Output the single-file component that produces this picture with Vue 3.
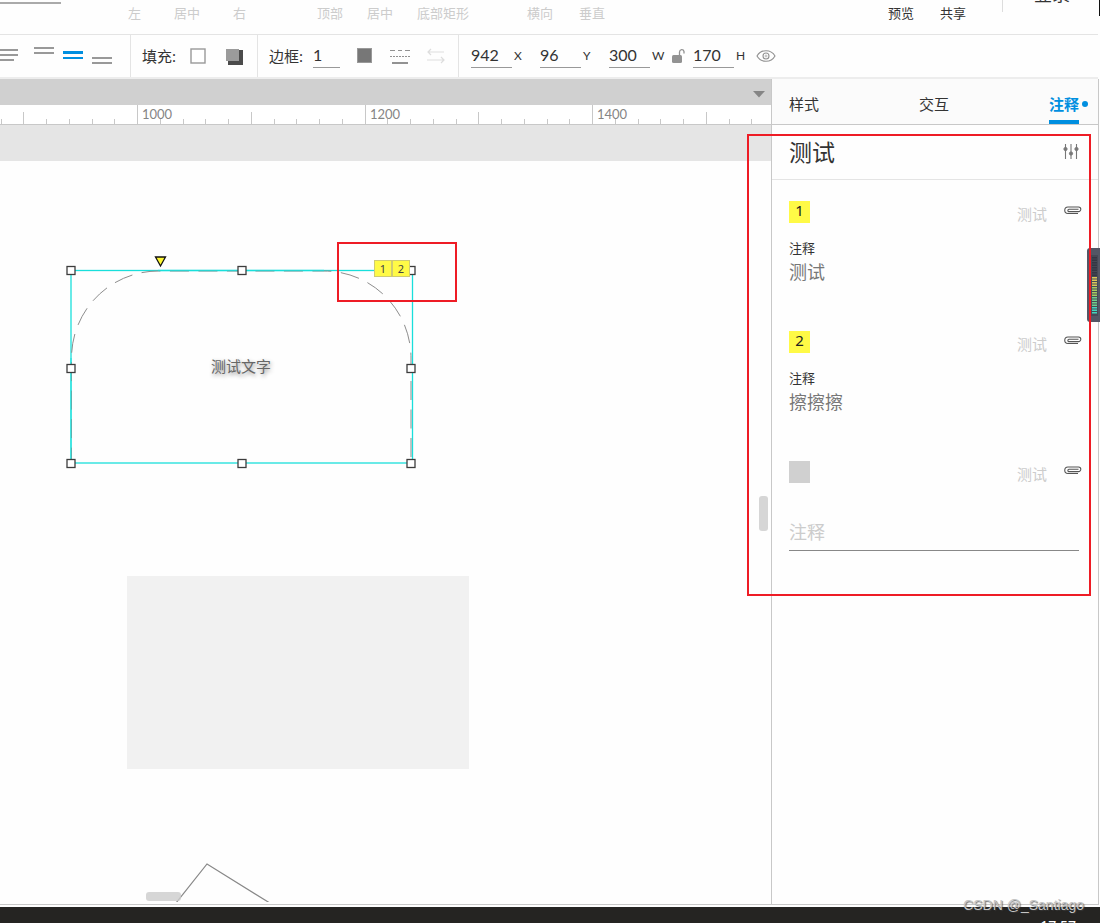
<script setup>
import { ref } from 'vue'

const alignGroups = [
  { name: 'horizontal', items: ['左', '居中', '右'] },
  { name: 'vertical', items: ['顶部', '居中', '底部矩形'] },
  { name: 'distribute', items: ['横向', '垂直'] },
]

const geometry = ref([
  { key: 'X', value: '942' },
  { key: 'Y', value: '96' },
  { key: 'W', value: '300' },
  { key: 'H', value: '170' },
])
const borderWidth = ref('1')
const draft = ref('')

const ticks = Array.from({ length: 34 }, (_, i) => {
  const k = i - 6
  const major = k % 10 === 0
  const mid = k % 5 === 0
  return {
    x: Math.round(137 + 22.75 * k),
    top: major ? 0 : mid ? 7 : 14,
    label: major ? String(1000 + k * 20) : '',
  }
})

const notes = [
  { id: 1, text: '测试' },
  { id: 2, text: '擦擦擦' },
]

const handles = [
  [71, 270], [242, 270], [411, 270],
  [71, 368], [411, 368],
  [71, 463], [242, 463], [411, 463],
]

const meter = Array.from({ length: 23 }, (_, i) => ({
  y: 9 + i * 2.5,
  fill: i < 8 ? '#343743' : i < 12 ? '#d9c95a' : i < 16 ? '#a5cc62' : i < 20 ? '#6fd08c' : '#45d6bd',
}))
</script>

<template>
  <div class="app">
    <header class="menu">
      <span class="menu-rule"></span>
      <div v-for="g in alignGroups" :key="g.name" class="menu-group" :class="g.name">
        <button v-for="t in g.items" :key="t" type="button" disabled>{{ t }}</button>
      </div>
      <div class="account">
        <button type="button">预览</button>
        <button type="button">共享</button>
        <span class="account-rule"></span>
        <button type="button" class="login">登录</button>
      </div>
    </header>

    <div class="toolbar">
      <section class="tools text-tools">
        <button type="button" aria-label="左对齐" class="icon">
          <svg width="19" height="20" fill="#999"><path d="M0 3h18v2H0zM0 8h18v2H0zM0 13h14v2H0z" /></svg>
        </button>
        <button type="button" aria-label="顶部对齐" class="icon">
          <svg width="20" height="20" fill="#999"><path d="M0 1h20v2H0zM0 6h20v2H0z" /></svg>
        </button>
        <button type="button" aria-label="垂直居中" class="icon">
          <svg width="20" height="20" fill="#008fe0"><path d="M0 5h20v3H0zM0 11h20v2H0z" /></svg>
        </button>
        <button type="button" aria-label="底部对齐" class="icon">
          <svg width="20" height="20" fill="#999"><path d="M0 11h20v2H0zM0 16h20v2H0z" /></svg>
        </button>
      </section>
      <section class="tools fill-tools">
        <span class="caption">填充:</span>
        <button type="button" aria-label="填充颜色" class="icon">
          <svg width="16" height="20"><rect x="1" y="3" width="14" height="14" fill="#fff" stroke="#999" stroke-width="1.4" /></svg>
        </button>
        <button type="button" aria-label="阴影" class="icon">
          <svg width="17" height="20"><path d="M2 4h15v15H2z" fill="#4b4b4b" /><path d="M0 3h13v12H0z" fill="#9b9b9b" /></svg>
        </button>
      </section>
      <section class="tools border-tools">
        <label class="caption" for="border-width">边框:</label>
        <input id="border-width" v-model="borderWidth" class="field small" />
        <button type="button" aria-label="边框颜色" class="icon">
          <svg width="16" height="20"><rect x="0.5" y="2.5" width="14" height="14" fill="#777" stroke="#999" /></svg>
        </button>
        <button type="button" aria-label="线型" class="icon">
          <svg width="20" height="20" fill="none" stroke="#929292">
            <path d="M0 4.500h5M8 4.500h4M15 4.500h5" />
            <path d="M0 10.500h20" stroke-dasharray="2 1" />
            <path d="M2 17h16" stroke-width="2" />
          </svg>
        </button>
        <button type="button" aria-label="箭头样式" class="icon">
          <svg width="18" height="20" fill="none" stroke="#ddd" stroke-width="1.2">
            <path d="M17 6H0.500M4 3L1 6l3 3M0 14h17M14 11l3 3-3 3" />
          </svg>
        </button>
      </section>
      <section class="tools geometry">
        <template v-for="g in geometry" :key="g.key">
          <button v-if="g.key === 'H'" type="button" aria-label="锁定宽高比" class="icon lock">
            <svg width="13" height="20">
              <path d="M7.500 10V6A2.300 2.600 0 0 1 12 5.500V7.500" fill="none" stroke="#929292" stroke-width="1.300" />
              <rect x="0" y="9" width="10" height="8" rx="1.500" fill="#929292" />
            </svg>
          </button>
          <input :id="'geo-' + g.key" v-model="g.value" class="field" />
          <label :for="'geo-' + g.key" class="unit" :class="'unit-' + g.key">{{ g.key }}</label>
        </template>
        <button type="button" aria-label="显示" class="icon">
          <svg width="20" height="20" fill="none" stroke="#929292" stroke-width="1.100">
            <path d="M1 10C5 3 15 3 19 10C15 17 5 17 1 10z" /><circle cx="10" cy="10" r="3" />
            <circle cx="10" cy="10" r="1" stroke-width=".6" />
          </svg>
        </button>
      </section>
    </div>

    <main class="workspace">
      <section class="editor">
        <div class="pagebar"><button type="button" aria-label="页面列表" class="icon"><svg width="12" height="7"><path d="M0 0h12L6 6.500z" fill="#858585" /></svg></button></div>
        <svg class="ruler">
          <g v-for="t in ticks" :key="t.x">
            <rect :x="t.x" :y="t.top" width="1" :height="19 - t.top" fill="#c8c8c8" />
            <text v-if="t.label" :x="t.x + 5" y="14">{{ t.label }}</text>
          </g>
        </svg>
        <div class="stage">
          <div class="page-head"></div>
          <svg class="shapes">
            <g transform="translate(0 -125)">
              <rect x="127" y="576" width="342" height="193" fill="#f1f1f1" />
              <path d="M176 903L207 864L269 902.500" fill="none" stroke="#888" stroke-width="1.200" />
              <rect x="71" y="270.500" width="341.500" height="192.500" fill="none" stroke="#19dfdb" stroke-width="1.300" />
              <path d="M411 463V358A87 87 0 0 0 324 271H158.500A87 87 0 0 0 71.500 358V463" fill="none" stroke="#8d8d8d" stroke-dasharray="19 9.500" stroke-dashoffset="-6" />
              <path d="M71 358V463M158 270.500H324" stroke="#19dfdb" stroke-opacity=".7" stroke-width="1.300" />
              <rect v-for="h in handles" :key="h.join()" :x="h[0] - 4" :y="h[1] - 3.5" width="8" height="8" fill="#fff" stroke="#3c3c3c" stroke-width="1.300" />
              <path d="M155.500 257H165.500L160.500 266z" fill="#fdf733" stroke="#111" stroke-width="1.300" />
            </g>
          </svg>
          <div class="shape-text">测试文字</div>
          <div class="flags"><span v-for="n in notes" :key="n.id">{{ n.id }}</span></div>
          <div class="thumb vertical-thumb"></div>
          <div class="thumb horizontal-thumb"></div>
          <div class="mark flag-mark"></div>
        </div>
      </section>

      <aside class="inspector">
        <nav class="tabs">
          <button type="button">样式</button>
          <button type="button">交互</button>
          <button type="button" class="active">注释</button>
        </nav>
        <div class="title">
          <h1>测试</h1>
          <button type="button" aria-label="注释设置" class="icon">
            <svg width="16" height="16" fill="#777" stroke="#777">
              <path d="M2.500 0v15M8 0v15M13.500 0v15" stroke-width="1.100" />
              <circle cx="2.500" cy="5" r="1.600" /><circle cx="8" cy="9.500" r="1.600" /><circle cx="13.500" cy="5" r="1.600" />
            </svg>
          </button>
        </div>
        <article v-for="n in [...notes, { id: 0 }]" :key="n.id" class="note">
          <div class="note-head">
            <span class="tag" :class="{ blank: !n.id }">{{ n.id || '' }}</span>
            <span class="owner">测试</span>
            <button type="button" aria-label="附加" class="icon clip">
              <svg width="18" height="9" fill="none" stroke="#555" stroke-width="1.100">
                <path d="M14 7.500H4A3.200 3.200 0 0 1 4 1H14.500A2.300 2.300 0 0 1 14.500 5.600H5A1.100 1.100 0 0 1 5 3.300H14.500" />
              </svg>
            </button>
          </div>
          <template v-if="n.id">
            <h2>注释</h2>
            <p>{{ n.text }}</p>
          </template>
          <input v-else v-model="draft" class="draft" placeholder="注释" aria-label="注释" />
        </article>
      </aside>
    </main>

    <footer class="taskbar"><time>17:57</time></footer>

    <svg class="level" width="13" height="74">
      <rect width="20" height="74" rx="3" fill="#535665" />
      <rect x="4" y="7" width="7" height="61" fill="#464956" />
      <rect v-for="m in meter" :key="m.y" x="5" :y="m.y" width="5" height="1.500" :fill="m.fill" />
    </svg>
    <div class="mark panel-mark"></div>
    <div class="edge"></div>
    <div class="watermark">CSDN @_Santiago</div>
  </div>
</template>

<style>
html, body { margin: 0; background: #fff; }
</style>

<style scoped>
* { box-sizing: border-box; }
.app {
  position: relative;
  display: flex;
  flex-direction: column;
  height: 100vh;
  min-height: 620px;
  overflow: hidden;
  color: #333;
  background: #fefefe;
  font-family: "Noto Sans", "Noto Sans CJK SC", sans-serif;
}
button {
  padding: 0;
  border: 0;
  background: none;
  color: inherit;
  font: inherit;
  white-space: nowrap;
}
.icon { display: flex; flex: none; }
svg { display: block; }

.menu {
  position: relative;
  display: flex;
  flex: none;
  height: 35px;
  margin-right: 2px;
  padding: 3px 0 0 128px;
  border-bottom: 1px solid #e4e4e4;
  font-size: 13px;
  line-height: 20px;
}
.menu button { height: 20px; }
.menu-rule {
  position: absolute;
  left: 0;
  top: 2px;
  width: 61px;
  height: 2px;
  background: #aaa;
}
.menu-group { display: flex; gap: 26px; color: #ccc; }
.horizontal { gap: 33px; margin-right: 71px; }
.vertical { gap: 24px; margin-right: 58px; }
.account { display: flex; gap: 26px; margin-left: auto; padding-right: 28px; }
.account-rule {
  width: 1px;
  height: 12px;
  margin: -3px 5px 0 10px;
  background: #ddd;
}
.menu .login { height: 24px; margin-top: -21px; font-size: 18px; line-height: 24px; }

.toolbar {
  display: flex;
  flex: none;
  height: 44px;
  margin-right: 2px;
  border-bottom: 2px solid #ededed;
}
.tools { display: flex; align-items: center; border-right: 1px solid #e4e4e4; }
.text-tools { width: 131px; gap: 9px; }
.text-tools .icon:first-child { margin-right: 6px; }
.fill-tools { width: 127px; padding-left: 11px; }
.fill-tools .icon + .icon { margin-left: 20px; }
.border-tools { width: 201px; padding-left: 11px; gap: 17px; }
.border-tools .caption { width: 44px; margin-right: -17px; }
.geometry { flex: 1; border: 0; padding-left: 12px; }
.caption { flex: none; width: 48px; font-size: 15px; line-height: 20px; white-space: nowrap; }
.field {
  width: 41px;
  height: 24px;
  padding: 0 0 3px;
  border: 0;
  border-bottom: 1px solid #999;
  border-radius: 0;
  outline: 0;
  background: none;
  color: #333;
  font: 16px/20px Lato, sans-serif;
}
.small { width: 27px; }
.unit { width: 28px; padding-left: 2px; font: 12px/20px Lato, sans-serif; }
.unit-W, .unit-H { width: 22px; }
.lock { width: 21px; }

.workspace {
  display: flex;
  flex: 1;
  min-height: 0;
  margin-right: 1px;
  border-right: 1px solid #c8c8c8;
  border-bottom: 1px solid #c8c8c8;
}
.editor { display: flex; flex: 1; flex-direction: column; min-width: 0; }
.pagebar {
  display: flex;
  flex: none;
  align-items: center;
  justify-content: flex-end;
  height: 26px;
  padding: 4px 6px 0 0;
  background: #d0d0d0;
}
.ruler {
  flex: none;
  width: 100%;
  height: 20px;
  border-bottom: 1px solid #c8c8c8;
  background: #fff;
  font: 13px Lato, sans-serif;
}
.ruler text { fill: #858585; }
.stage { position: relative; flex: 1; min-height: 0; }
.page-head { height: 36px; background: #e5e5e5; }
.shapes { position: absolute; left: 0; top: 0; width: 100%; height: calc(100% - 2px); }
.shape-text {
  position: absolute;
  left: 211px;
  top: 231px;
  color: #666;
  font-size: 15px;
  line-height: 20px;
  text-shadow: 1px 2px 4px rgba(0, 0, 0, .45);
}
.flags { position: absolute; left: 374px; top: 135px; display: flex; }
.flags span {
  width: 18px;
  height: 17px;
  border: 1px solid #cfcb72;
  background: #fffa46;
  color: #444;
  font-size: 11px;
  line-height: 15px;
  text-align: center;
}
.thumb { position: absolute; border-radius: 3px; background: rgba(204, 204, 204, .8); }
.vertical-thumb { right: 3px; top: 371px; width: 9px; height: 35px; }
.horizontal-thumb { left: 146px; bottom: 3px; width: 35px; height: 9px; }
.mark { position: absolute; border: 2px solid #ee1c25; pointer-events: none; }
.flag-mark { left: 337px; top: 117px; width: 120px; height: 60px; }
.panel-mark { right: 9px; top: 134px; width: 344px; height: 462px; }

.inspector { flex: none; width: 327px; border-left: 1px solid #c8c8c8; }
.tabs {
  display: flex;
  justify-content: space-between;
  height: 46px;
  padding: 7px 19px 0 17px;
  border-bottom: 1px solid #c8c8c8;
  background: #fbfbfb;
  font-size: 15px;
}
.tabs button { position: relative; height: 38px; border-bottom: 4px solid transparent; }
.tabs .active { border-color: #008fe0; color: #008fe0; font-weight: 700; }
.active::after {
  content: "";
  position: absolute;
  left: 33px;
  top: 15px;
  width: 6px;
  height: 6px;
  border-radius: 50%;
  background: #008fe0;
}
.title {
  display: flex;
  align-items: center;
  justify-content: space-between;
  height: 55px;
  padding: 0 19px 1px 17px;
  border-bottom: 1px solid #e4e4e4;
}
h1 { margin: 0; font-size: 23px; font-weight: 400; line-height: 32px; }
.note { height: 130px; padding: 21px 19px 0 17px; }
.note-head { display: flex; align-items: flex-start; height: 37px; margin-right: -3px; }
.tag {
  width: 21px;
  height: 22px;
  background: #fffa46;
  color: #222;
  font-size: 15px;
  line-height: 19px;
  text-align: center;
}
.blank { background: #d0d0d0; }
.owner { margin: 3px 17px 0 auto; color: #ccc; font-size: 15px; line-height: 20px; }
.clip { margin-top: 5px; }
h2 { margin: 0; font-size: 13px; font-weight: 400; line-height: 20px; }
.note p { margin: 0; color: #777; font-size: 18px; line-height: 28px; }
.draft {
  display: block;
  width: 100%;
  height: 36px;
  margin-top: 17px;
  padding: 0 0 2px;
  border: 0;
  border-bottom: 1px solid #888;
  outline: 0;
  background: none;
  color: #777;
  font: 18px/26px "Noto Sans", "Noto Sans CJK SC", sans-serif;
}
.draft::placeholder { color: #ccc; opacity: 1; }

.taskbar {
  flex: none;
  height: 16px;
  margin-top: 2px;
  padding: 11px 24px 0 0;
  overflow: hidden;
  background: #252422;
  color: #fff;
  font-size: 14px;
  line-height: 16px;
  text-align: right;
}
.level { position: absolute; right: 0; top: 248px; }
.edge { position: absolute; right: 0; top: 0; width: 1px; height: 16px; background: #111; }
.watermark {
  position: absolute;
  right: 16px;
  bottom: 8px;
  color: #c4c4c4;
  font: 14px/20px "Liberation Sans", sans-serif;
  text-shadow: 1px 1px 1px rgba(60, 60, 60, .75);
}
</style>
